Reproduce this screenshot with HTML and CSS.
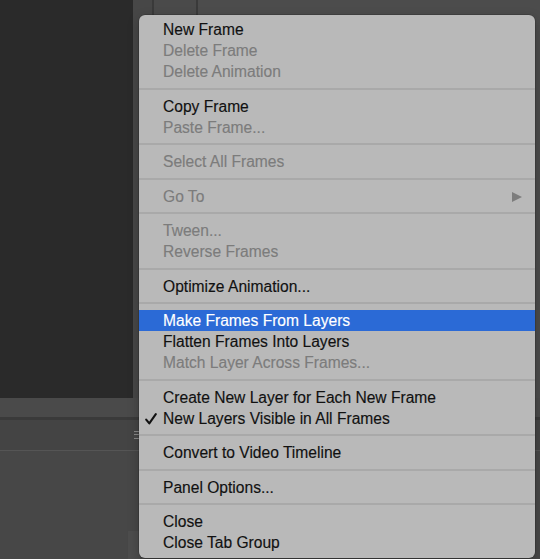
FILE: index.html
```html
<!DOCTYPE html>
<html>
<head>
<meta charset="utf-8">
<link rel="stylesheet" href="styles.css">
</head>
<body>
<div class="app">
  <div class="top">
    <div class="canvas"></div>
    <div class="side">
      <div class="tab t1"></div>
      <div class="tab t2"></div>
      <div class="tab t3"></div>
    </div>
  </div>
  <div class="band b1"></div>
  <div class="band b2"></div>
  <div class="band b3"><span class="grip"></span></div>
  <div class="band b4"><span class="box"></span></div>

  <div class="menu">
    <div class="item">New Frame</div>
    <div class="item dis">Delete Frame</div>
    <div class="item dis">Delete Animation</div>
    <div class="sep"></div>
    <div class="item">Copy Frame</div>
    <div class="item dis">Paste Frame...</div>
    <div class="sep"></div>
    <div class="item dis">Select All Frames</div>
    <div class="sep"></div>
    <div class="item dis sub">Go To<svg class="arrow" width="10" height="10" viewBox="0 0 10 10"><path d="M0 0 L10 5 L0 10 Z" fill="#7d7d7d"/></svg></div>
    <div class="sep"></div>
    <div class="item dis">Tween...</div>
    <div class="item dis">Reverse Frames</div>
    <div class="sep"></div>
    <div class="item">Optimize Animation...</div>
    <div class="sep"></div>
    <div class="item sel">Make Frames From Layers</div>
    <div class="item">Flatten Frames Into Layers</div>
    <div class="item dis">Match Layer Across Frames...</div>
    <div class="sep"></div>
    <div class="item">Create New Layer for Each New Frame</div>
    <div class="item checked"><svg class="check" width="12" height="12" viewBox="0 0 12 12"><path d="M1.2 6.6 L4.3 10.4 L10.8 1.2" fill="none" stroke="#111111" stroke-width="2.1" stroke-linecap="round" stroke-linejoin="round"/></svg>New Layers Visible in All Frames</div>
    <div class="sep"></div>
    <div class="item">Convert to Video Timeline</div>
    <div class="sep"></div>
    <div class="item">Panel Options...</div>
    <div class="sep"></div>
    <div class="item">Close</div>
    <div class="item">Close Tab Group</div>
  </div>
</div>
</body>
</html>
```

FILE: styles.css
```css
html, body {
  margin: 0;
  padding: 0;
  background: #474747;
}
.app {
  position: relative;
  width: 540px;
  height: 559px;
  overflow: hidden;
  display: flex;
  flex-direction: column;
  background: #484848;
}
.top {
  height: 398px;
  display: flex;
}
.canvas {
  width: 133px;
  background: #2a2a2a;
}
.side {
  flex: 1;
  display: flex;
  background: #474747;
}
.tab.t1 {
  width: 19px;
  border-right: 2px solid #3a3a3a;
}
.tab.t2 {
  width: 42px;
  border-right: 2px solid #3a3a3a;
  background: #4a4a4a;
}
.tab.t3 {
  flex: 1;
  background: #4c4c4c;
}
.band.b1 {
  height: 19px;
  background: #4a4a4a;
}
.band.b2 {
  height: 3px;
  background: #3a3a3a;
}
.band.b3 {
  height: 30px;
  background: #444444;
  border-bottom: 1px solid #555555;
  display: flex;
  align-items: center;
}
.grip {
  margin-left: 134px;
  width: 6px;
  height: 6px;
  border-top: 1px solid #8a8a8a;
  border-bottom: 1px solid #8a8a8a;
  background: linear-gradient(#484848 2px, #8a8a8a 2px, #8a8a8a 3px, #484848 3px);
}
.band.b4 {
  flex: 1;
  background: #474747;
  position: relative;
}
.box {
  position: absolute;
  left: 128px;
  top: 80px;
  width: 12px;
  height: 40px;
  background: #4d4d4d;
}

.menu {
  position: absolute;
  left: 139px;
  top: 15px;
  width: 396px;
  padding: 4px 0 5px;
  background: #b9b9b9;
  border-radius: 6px;
  box-shadow: 0 0 0 0.5px rgba(0,0,0,0.25), 0 4px 12px rgba(0,0,0,0.25);
  font-family: "Liberation Sans", Arial, sans-serif;
  font-size: 15.6px;
  color: #111111;
  -webkit-text-stroke: 0.15px currentColor;
}
.item {
  position: relative;
  height: 21px;
  line-height: 21px;
  padding-left: 24px;
  white-space: nowrap;
}
.item.dis {
  color: #7c7c7c;
}
.item.sel {
  background: #2b6ad6;
  color: #ffffff;
}
.check {
  position: absolute;
  left: 145px;
  left: 6px;
  top: 5px;
}
.arrow {
  position: absolute;
  right: 13px;
  top: 6px;
}
.sep {
  height: 2px;
  margin: 5.75px 0;
  background: #a9a9a9;
}
```
